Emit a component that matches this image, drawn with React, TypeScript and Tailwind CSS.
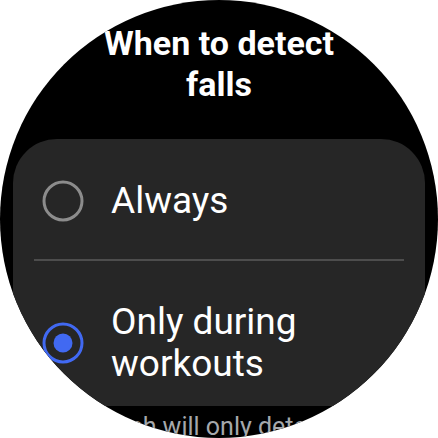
import React from 'react';

const Radio = ({ checked }: { checked?: boolean }) =>
  checked ? (
    <svg width="42" height="42" viewBox="0 0 42 42" className="shrink-0">
      <circle cx="21" cy="21" r="19" fill="none" stroke="#4169f2" strokeWidth="3" />
      <circle cx="21" cy="21" r="9.5" fill="#4169f2" />
    </svg>
  ) : (
    <svg width="42" height="42" viewBox="0 0 42 42" className="shrink-0">
      <circle cx="21" cy="21" r="19" fill="none" stroke="#8c8c8c" strokeWidth="3" />
    </svg>
  );

export default function App() {
  return (
    <div className="w-[438px] h-[438px] bg-white" style={{ fontFamily: 'Roboto, "Noto Sans", sans-serif' }}>
      <div className="w-[438px] h-[438px] rounded-full bg-black overflow-hidden flex flex-col">
        {/* Title */}
        <h1 className="pt-[23px] text-center text-white text-[34px] leading-[41px] font-bold">
          When to detect
          <br />
          falls
        </h1>

        {/* Options card */}
        <div className="mt-[34px] mx-[13px] rounded-[44px] bg-[#262626] pt-[40px] pb-[21px] shrink-0">
          <div className="flex items-center pl-[29px] gap-[27px]">
            <Radio />
            <span className="text-white text-[37px] leading-[44px]">Always</span>
          </div>
          <div className="mx-[21px] mt-[36px] h-[2px] bg-[#4d4d4d]" />
          <div className="flex items-center pl-[29px] gap-[27px] mt-[40px]">
            <Radio checked />
            <span className="flex flex-col text-white text-[37px] leading-[42px]">
              <span>Only during</span>
              <span>workouts</span>
            </span>
          </div>
        </div>

        <p className="px-[86px] pt-[6px] text-[#a5a8ac] text-[25px] leading-[30px] whitespace-nowrap">
          Watch will only detect falls
        </p>
      </div>
    </div>
  );
}
